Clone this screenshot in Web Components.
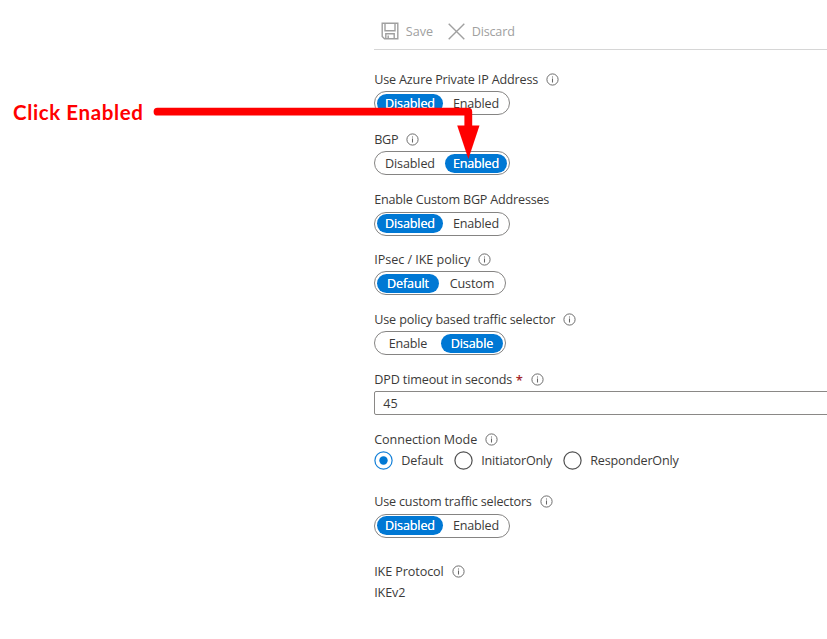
<!DOCTYPE html>
<html lang="en">
<head>
<meta charset="utf-8">
<title>Connection configuration</title>
<style>
html, body { margin: 0; background: #fff; overflow: hidden; }
</style>
</head>
<body>
<config-page></config-page>
<script>
const define = (name, markup, setup) => {
  const template = document.createElement('template');
  template.innerHTML = markup;
  customElements.define(name, class extends HTMLElement {
    connectedCallback() {
      if (this.shadowRoot) return;
      this.attachShadow({ mode: 'open' }).append(template.content.cloneNode(true));
      if (setup) setup(this, this.shadowRoot);
    }
  });
};

// Text tracked so that its line takes the width given in "w".
define('fit-text', `<style>
:host { display: inline-block; white-space: nowrap; flex: none; padding-top: 1px; }
</style><slot></slot>`, (el) => {
  const w = parseFloat(el.getAttribute('w'));
  const n = el.textContent.length;
  const natural = el.getBoundingClientRect().width;
  if (w && natural) {
    el.style.letterSpacing = ((w - natural) / n) + 'px';
    el.style.width = w + 'px';
  }
});

define('info-icon', `<style>
:host { display: block; width: 13px; height: 13px; flex: none; }
svg { display: block; }
</style>
<svg width="13" height="13" viewBox="0 0 13 13" fill="none" stroke="#666">
<circle cx="6.5" cy="6.5" r="5.6" stroke-width=".95"/>
<path d="M6.5 5.6V9.5M6.5 3.4V4.6" stroke-width="1.05"/>
</svg>`);

define('form-field', `<style>
:host { display: block; }
.label { display: flex; align-items: center; height: 20px; margin-bottom: var(--gap, 2px); }
.req { color: #a4262c; margin-left: 3.5px; width: 7px; font-size: 13px; font-weight: 600; padding-top: 1px; }
info-icon { margin-left: 8px; }
</style>
<div class="label"></div><slot></slot>`, (el, root) => {
  const label = root.querySelector('.label');
  const text = document.createElement('fit-text');
  text.textContent = el.getAttribute('label');
  text.setAttribute('w', el.getAttribute('w'));
  label.append(text);
  if (el.hasAttribute('required')) {
    const star = document.createElement('span');
    star.className = 'req';
    star.textContent = '*';
    label.append(star);
  }
  if (el.hasAttribute('info')) label.append(document.createElement('info-icon'));
});

define('toggle-option', `<style>
:host { display: flex; align-items: center; justify-content: center; height: 19px; border-radius: 10px; flex: none; }
:host([on]) { background: #0078d4; color: #fff; text-shadow: 0 0 .4px #fff; }
</style><slot></slot>`, (el) => { el.style.width = el.getAttribute('width') + 'px'; });

define('toggle-group', `<style>
:host { display: flex; box-sizing: border-box; width: fit-content; height: 24px; align-items: center; gap: 2px;
  padding: 0 1.75px; border: 1.2px solid #858483; border-radius: 12px; background: #fff; }
</style><slot></slot>`);

define('radio-option', `<style>
:host { display: flex; align-items: center; gap: 8px; }
svg { display: block; flex: none; }
</style>
<svg width="19" height="19" viewBox="0 0 19 19" fill="none">
<circle class="ring" cx="9.5" cy="9.5" r="8.6" stroke="#505050" stroke-width="1.2"/>
<circle class="dot" cx="9.5" cy="9.5" r="4.2"/>
</svg><slot></slot>`, (el, root) => {
  if (el.hasAttribute('on')) {
    root.querySelector('.ring').setAttribute('stroke', '#1480d8');
    root.querySelector('.dot').setAttribute('fill', '#0078d4');
  }
});

define('radio-row', `<style>
:host { display: flex; gap: 11px; align-items: center; height: 23px; }
</style><slot></slot>`);

define('text-box', `<style>
:host { display: flex; align-items: center; box-sizing: border-box; height: 24px; width: 470px;
  border: 1px solid #8a8886; border-radius: 2px; padding: 0 0 0 8px; }
</style><slot></slot>`);

define('command-button', `<style>
:host { display: flex; align-items: center; gap: 6.5px; color: #a0a0a0; }
</style><slot name="icon"></slot><slot></slot>`);

define('command-bar', `<style>
:host { display: flex; align-items: center; gap: 15px; height: 50px; box-sizing: border-box; padding: 13px 0 0 7px;
  border-bottom: 1px solid #d6d6d6; }
</style><slot></slot>`);

define('red-callout', `<style>
:host { position: absolute; left: 0; top: 0; width: 520px; height: 170px; pointer-events: none; }
svg { display: block; position: absolute; inset: 0; }
fit-text { position: absolute; left: 13px; top: 99px; font: 700 20.5px/24px Lato, sans-serif; color: #f00; }
</style>
<fit-text w="130.5">Click Enabled</fit-text>
<svg width="520" height="170" viewBox="0 0 520 170">
<path d="M157.5 111.7H468.3V127" fill="none" stroke="#f00" stroke-width="7.8" stroke-linecap="round" stroke-linejoin="round"/>
<path d="M457.2 125.5H479.5L468.4 159Z" fill="#f00"/>
</svg>`);

define('config-page', `<style>
:host { display: block; position: relative; box-sizing: border-box; width: 827px; height: 639px; overflow: hidden;
  padding-left: 374.2px; background: #fff; color: #3b3a39; font: 12.6px/20px "Open Sans", "Noto Sans", sans-serif; }
main { display: grid; padding-top: 19px; grid-template-rows: 60px 60.5px 59.5px 60px 60px 60px 62.5px 69.5px 50px; }
</style>
<command-bar>
  <command-button>
    <svg slot="icon" width="18" height="18" viewBox="0 0 18 18" fill="none" stroke="#a0a0a0" stroke-width="1.4">
      <path d="M1.2 1.2H16.8V16.8H3.5L1.2 14.5ZM4 1.5V8.7H14V1.5M4.8 16.5V11.8H13.2V16.5M7.2 13.5V16.5"/>
    </svg>
    <fit-text w="27.5">Save</fit-text>
  </command-button>
  <command-button>
    <svg slot="icon" width="17" height="17" viewBox="0 0 17 17" fill="none" stroke="#a0a0a0" stroke-width="1.4">
      <path d="M.7.7L16.3 16.3M16.3.7L.7 16.3"/>
    </svg>
    <fit-text w="43">Discard</fit-text>
  </command-button>
</command-bar>
<main>
  <form-field label="Use Azure Private IP Address" w="164" info>
    <toggle-group><toggle-option width="66" on><fit-text w="50">Disabled</fit-text></toggle-option><toggle-option width="62"><fit-text w="46">Enabled</fit-text></toggle-option></toggle-group>
  </form-field>
  <form-field label="BGP" w="24" info>
    <toggle-group><toggle-option width="66"><fit-text w="50">Disabled</fit-text></toggle-option><toggle-option width="62" on><fit-text w="46">Enabled</fit-text></toggle-option></toggle-group>
  </form-field>
  <form-field label="Enable Custom BGP Addresses" w="175">
    <toggle-group><toggle-option width="66" on><fit-text w="50">Disabled</fit-text></toggle-option><toggle-option width="62"><fit-text w="46">Enabled</fit-text></toggle-option></toggle-group>
  </form-field>
  <form-field label="IPsec / IKE policy" w="96" info>
    <toggle-group><toggle-option width="62" on><fit-text w="42">Default</fit-text></toggle-option><toggle-option width="62"><fit-text w="44.5">Custom</fit-text></toggle-option></toggle-group>
  </form-field>
  <form-field label="Use policy based traffic selector" w="181" info>
    <toggle-group><toggle-option width="62"><fit-text w="38.5">Enable</fit-text></toggle-option><toggle-option width="62" on><fit-text w="42.5">Disable</fit-text></toggle-option></toggle-group>
  </form-field>
  <form-field label="DPD timeout in seconds" w="138" required info>
    <text-box><fit-text w="14.5">45</fit-text></text-box>
  </form-field>
  <form-field label="Connection Mode" w="103" info style="--gap: 0px">
    <radio-row>
      <radio-option on><fit-text w="42">Default</fit-text></radio-option>
      <radio-option><fit-text w="71">InitiatorOnly</fit-text></radio-option>
      <radio-option><fit-text w="88.5">ResponderOnly</fit-text></radio-option>
    </radio-row>
  </form-field>
  <form-field label="Use custom traffic selectors" w="157.5" info>
    <toggle-group><toggle-option width="66" on><fit-text w="50">Disabled</fit-text></toggle-option><toggle-option width="62"><fit-text w="46">Enabled</fit-text></toggle-option></toggle-group>
  </form-field>
  <form-field label="IKE Protocol" w="69.5" info style="--gap: 1px">
    <fit-text w="31">IKEv2</fit-text>
  </form-field>
</main>
<red-callout></red-callout>`);
</script>
</body>
</html>
